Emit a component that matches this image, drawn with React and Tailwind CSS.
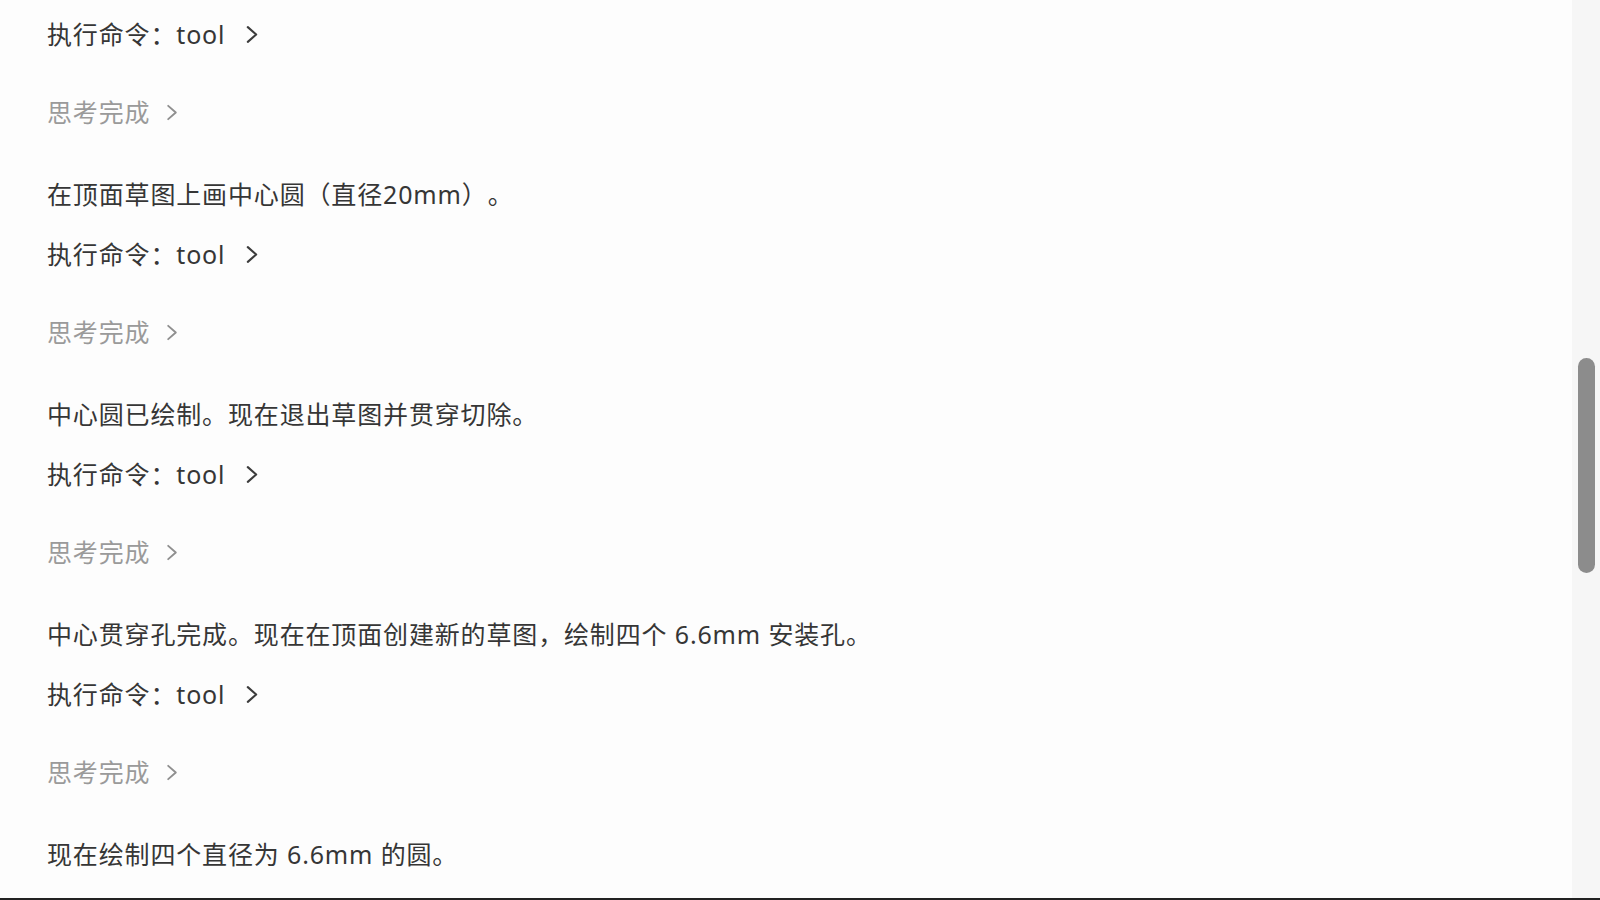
import React from "react";

const steps = [
  { text: null },
  { text: "在顶面草图上画中心圆（直径20mm）。" },
  { text: "中心圆已绘制。现在退出草图并贯穿切除。" },
  { text: "中心贯穿孔完成。现在在顶面创建新的草图，绘制四个 6.6mm 安装孔。" },
  { text: "现在绘制四个直径为 6.6mm 的圆。" },
];

function Chevron({ className }) {
  return (
    <svg viewBox="0 0 14 20" className={className} fill="none" stroke="currentColor" strokeWidth="2" strokeLinecap="round" strokeLinejoin="round">
      <polyline points="3,3 11,10 3,17" />
    </svg>
  );
}

function ToolCall() {
  return (
    <div className="flex items-center h-10 text-[#363636]">
      <span>执行命令：tool</span>
      <Chevron className="ml-[19px] w-[16px] h-[21px] text-[#3c3c3c]" />
    </div>
  );
}

function Thinking() {
  return (
    <div className="flex items-center h-10 mt-[38px] text-[#9a9a9a]">
      <span>思考完成</span>
      <Chevron className="ml-[15px] w-[14px] h-[19px] text-[#8f8f8f]" />
    </div>
  );
}

export default function App() {
  return (
    <div
      className="flex w-[1600px] h-[900px] overflow-hidden bg-[#fdfdfd] border-b-2 border-[#222222]"
      style={{ fontFamily: '"Noto Sans", "Noto Sans CJK SC", sans-serif' }}
    >
      {/* MESSAGE LOG */}
      <div className="flex-1 pl-[47px] pt-[14px] text-[25px] leading-10 tracking-[0.85px] [text-spacing-trim:space-all]">
        {steps.map((step, i) => (
          <div key={i}>
            {step.text && (
              <div className="h-10 mt-[42px] text-[#363636]">{step.text}</div>
            )}
            {i < steps.length - 1 && (
              <div className={step.text ? "mt-5" : ""}>
                <ToolCall />
                <Thinking />
              </div>
            )}
          </div>
        ))}
      </div>

      {/* SCROLLBAR */}
      <div className="w-[28px] bg-[#f6f6f6] flex justify-center">
        <div className="w-[17px] h-[215px] mt-[358px] rounded-full bg-[#8c8c8c]" />
      </div>
    </div>
  );
}
